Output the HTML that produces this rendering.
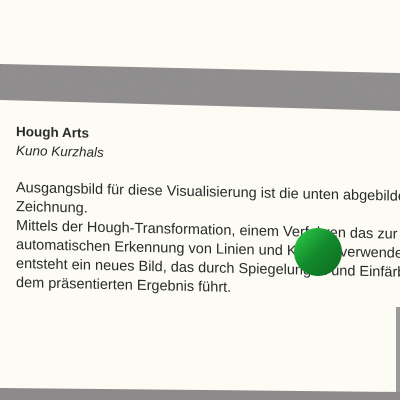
<!DOCTYPE html>
<html><head><style>
html,body{margin:0;padding:0;width:400px;height:400px;overflow:hidden;background:#fcfcf5;font-family:"Liberation Sans",sans-serif;}
.t{position:absolute;left:16px;top:122px;transform:skewY(1.3deg);transform-origin:0 0;color:#2a2a2a;white-space:nowrap;font-size:14.5px;line-height:19px}
</style></head><body>
<svg width="400" height="400" style="position:absolute;left:0;top:0">
<defs><filter id="n"><feTurbulence baseFrequency="0.9" numOctaves="2" seed="3"/><feColorMatrix values="0 0 0 0 0.5 0 0 0 0 0.5 0 0 0 0 0.5 0 0 0 0.25 0"/><feComposite in2="SourceGraphic" operator="in"/></filter></defs>
<polygon points="0,64 400,73 400,111 0,100" fill="#8c8a8a"/>
<polygon points="0,64 400,73 400,111 0,100" fill="#fff" filter="url(#n)"/>
<polygon points="0,388 400,392 400,400 0,400" fill="#8c8a8a"/>
<polygon points="396,307 400,307 400,392 396,392" fill="#9a9a9a"/>
</svg>
<div class="t">
<div style="font-weight:bold;font-size:13.5px">Hough Arts</div>
<div style="font-style:italic;font-size:13.5px">Kuno Kurzhals</div>
<div style="height:19px"></div>
<div>Ausgangsbild für diese Visualisierung ist die unten abgebildete</div>
<div>Zeichnung.</div>
<div>Mittels der Hough-Transformation, einem Verfahren das zur</div>
<div>automatischen Erkennung von Linien und Kreisen verwendet wird,</div>
<div>entsteht ein neues Bild, das durch Spiegelungen und Einfärbungen zu</div>
<div>dem präsentierten Ergebnis führt.</div>
</div>
<svg width="400" height="400" style="position:absolute;left:0;top:0">
<defs><linearGradient id="g" x1="0" y1="0" x2="1" y2="1"><stop offset="0" stop-color="#2fd14a"/><stop offset="0.5" stop-color="#13892c"/><stop offset="1" stop-color="#0c6b22"/></linearGradient></defs>
<circle cx="318" cy="252" r="24" fill="url(#g)"/>
</svg>
</body></html>
